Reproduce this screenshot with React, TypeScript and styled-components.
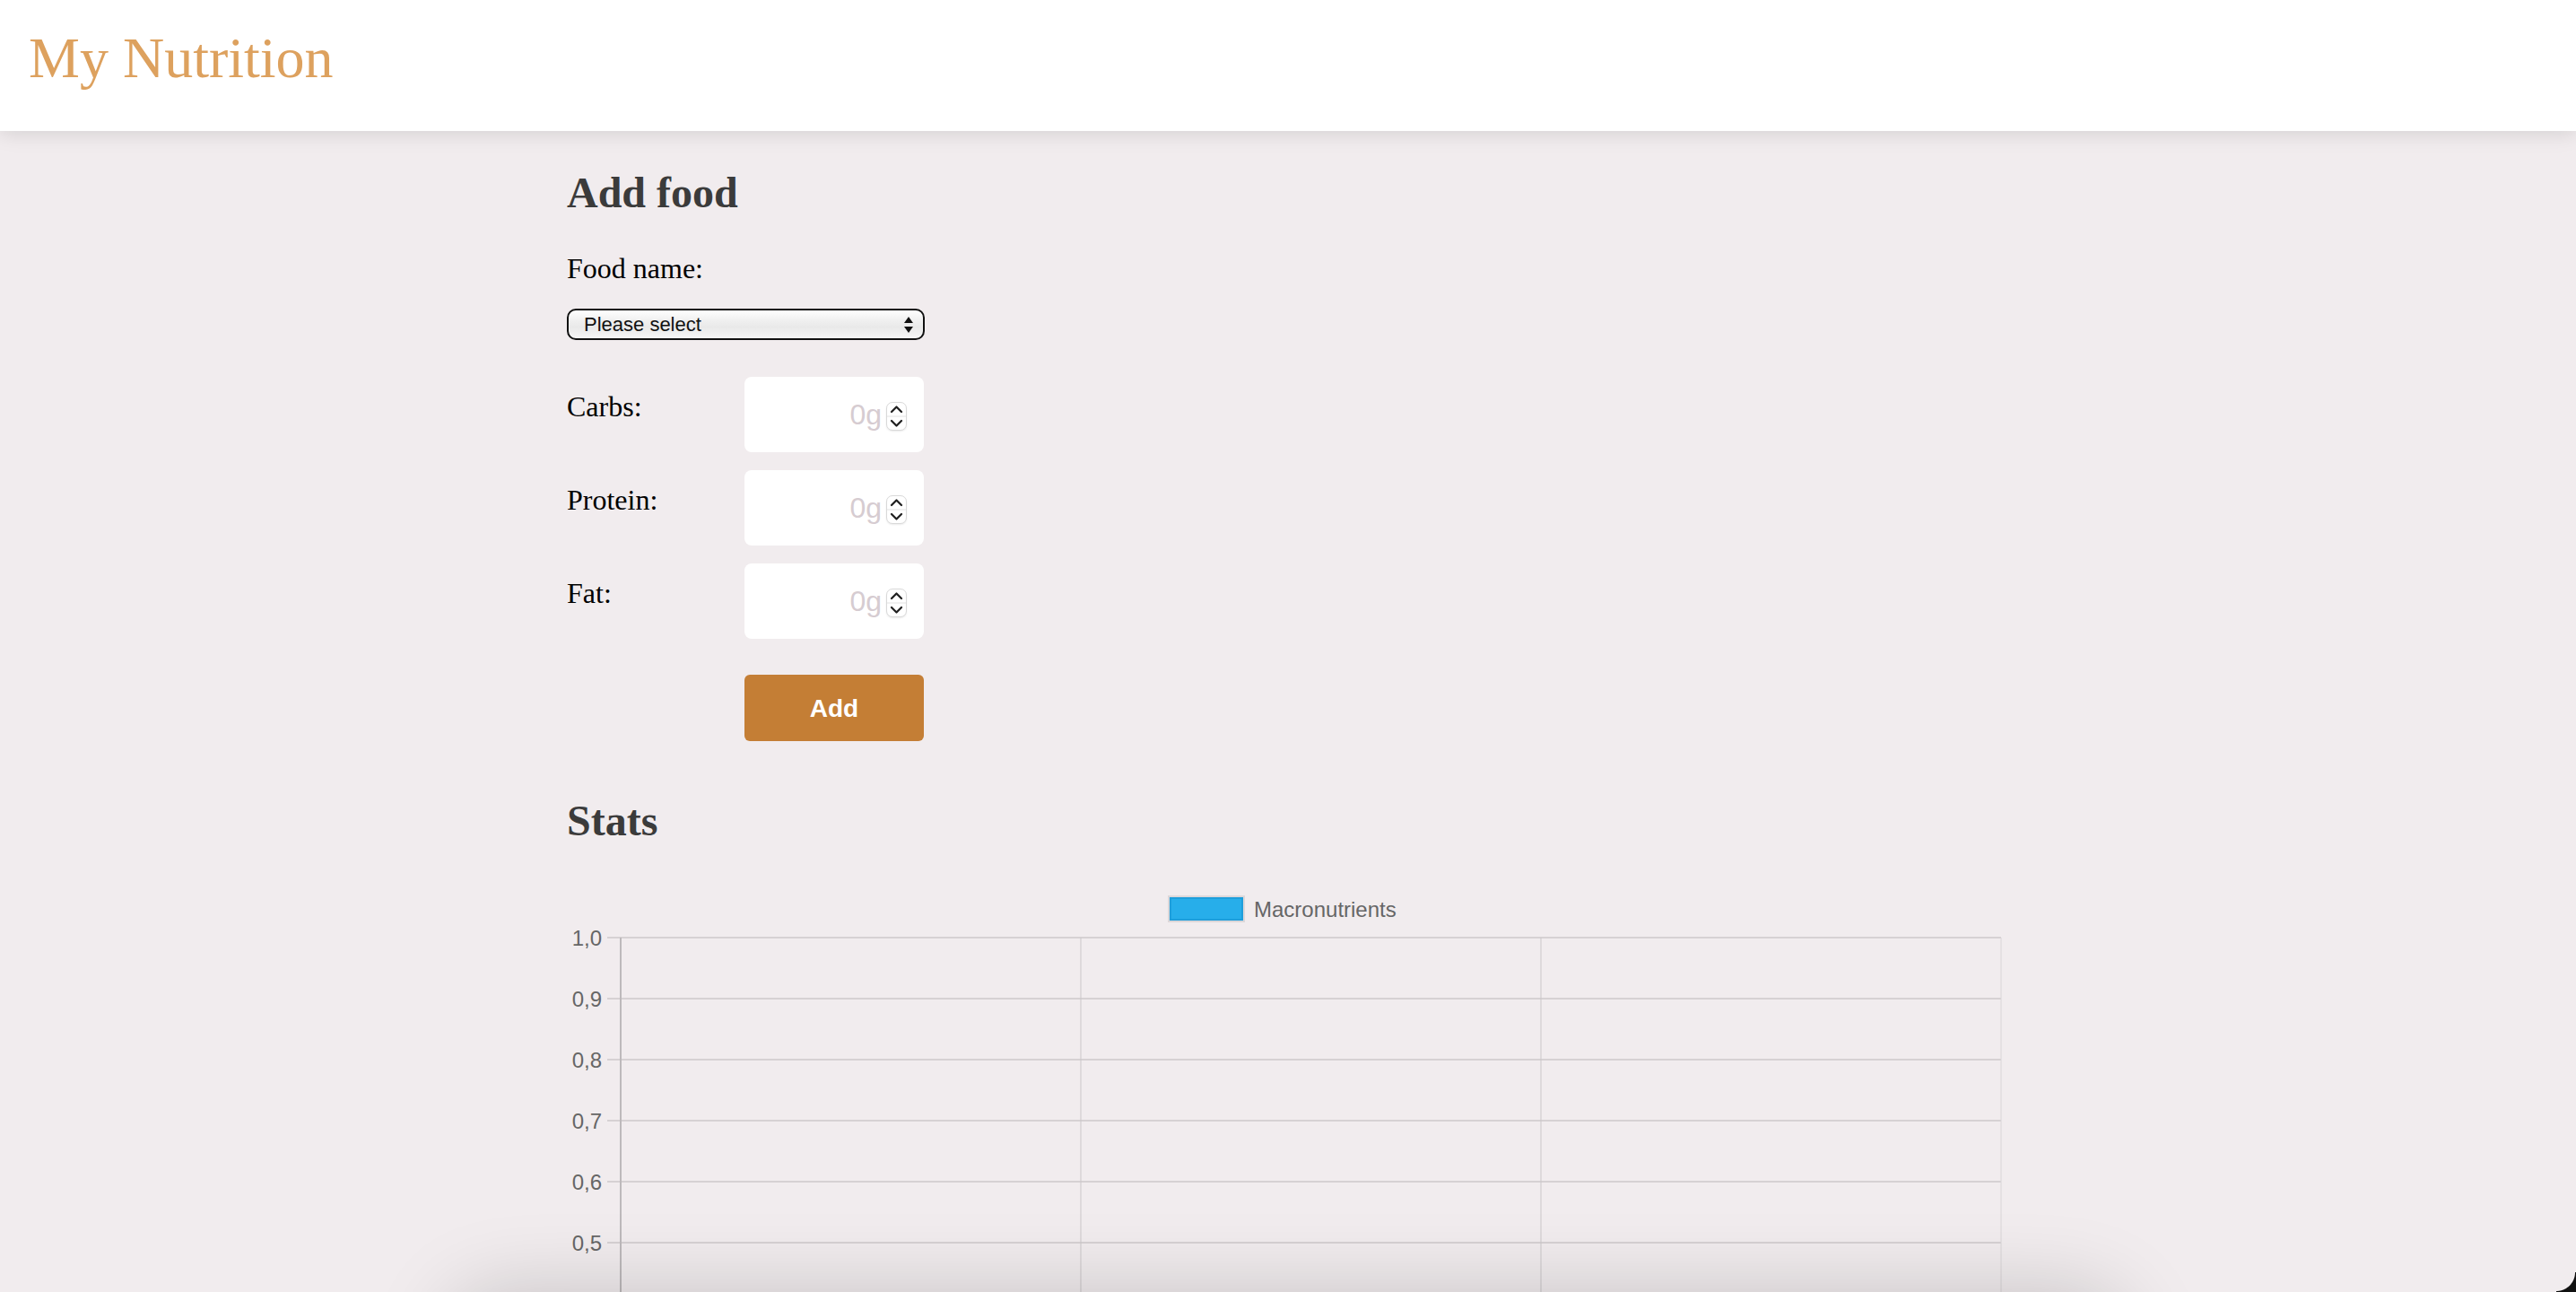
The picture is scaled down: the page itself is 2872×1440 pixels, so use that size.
import React from "react";
import styled, { createGlobalStyle } from "styled-components";

const GlobalStyle = createGlobalStyle`
  * { box-sizing: border-box; }
  html, body { margin: 0; padding: 0; background: #f1ecee; }
  body {
    font-family: "Liberation Serif", "Times New Roman", serif;
    color: #000;
    overflow: hidden;
  }
`;

const Header = styled.header`
  position: relative;
  z-index: 2;
  height: 146px;
  padding: 28px 32px 0;
  background: #fff;
  box-shadow: 0 2px 22px rgba(0, 0, 0, 0.13);
`;

const Title = styled.h1`
  margin: 0;
  font-family: "Liberation Serif", "Times New Roman", serif;
  font-weight: 400;
  font-size: 64px;
  line-height: 73.6px;
  color: #dda15e;
`;

const Main = styled.main`
  width: 1608px;
  margin: 0 auto;
  padding-top: 41px;
`;

const SectionTitle = styled.h2<{ $mt?: number; $mb: number }>`
  margin: ${(p) => p.$mt ?? 0}px 0 ${(p) => p.$mb}px;
  font-family: "Liberation Serif", "Times New Roman", serif;
  font-size: 48px;
  line-height: 56px;
  font-weight: 700;
  color: #3b3b3b;
`;

const FieldLabel = styled.label<{ $pt?: number }>`
  display: block;
  padding-top: ${(p) => p.$pt ?? 0}px;
  font-size: 32px;
  line-height: 37px;
  color: #000;
`;

const SelectWrap = styled.div`
  position: relative;
  width: 399px;
  height: 35px;
  margin-top: 26px;
`;

const Select = styled.select`
  appearance: none;
  -webkit-appearance: none;
  width: 100%;
  height: 100%;
  margin: 0;
  padding: 0 0 0 17px;
  border: 2px solid #111;
  border-radius: 10px;
  background: linear-gradient(#ffffff 0%, #f0f0f0 35%, #e9e9e9 60%, #f6f6f6 100%);
  box-shadow: inset 0 1px 2px rgba(255, 255, 255, 0.9);
  font-family: "Liberation Sans", Arial, sans-serif;
  font-size: 22px;
  color: #111;
  outline: none;
`;

const SelectArrows = styled.svg`
  position: absolute;
  right: 13px;
  top: 9px;
  width: 10px;
  height: 18px;
  pointer-events: none;
`;

const FormGrid = styled.div`
  display: grid;
  grid-template-columns: 198px 200px;
  row-gap: 20px;
  align-items: start;
  margin-top: 41px;
`;

const InputBox = styled.div`
  display: flex;
  align-items: center;
  gap: 5px;
  width: 200px;
  height: 84px;
  padding: 0 19px 0 12px;
  background: #fff;
  border-radius: 8px;
`;

const NumberInput = styled.input`
  flex: 1;
  min-width: 0;
  margin: 0;
  padding: 0;
  border: none;
  outline: none;
  background: transparent;
  text-align: right;
  font-family: "Liberation Sans", Arial, sans-serif;
  font-size: 32px;
  color: #333;
  -moz-appearance: textfield;
  &::placeholder {
    color: #d6ccd1;
  }
  &::-webkit-inner-spin-button,
  &::-webkit-outer-spin-button {
    -webkit-appearance: none;
    margin: 0;
  }
`;

const Spinner = styled.div`
  flex: none;
  width: 23px;
  height: 32px;
  margin-top: 4px;
  border: 1px solid #d9d9d9;
  border-radius: 7px;
  background: #fff;
  box-shadow: 0 1px 2px rgba(0, 0, 0, 0.08);
  display: flex;
`;

const AddButton = styled.button`
  grid-column: 2;
  width: 200px;
  height: 74px;
  margin-top: 20px;
  padding: 2px 0 0;
  border: none;
  border-radius: 6px;
  background: #c47e35;
  color: #fff;
  font-family: "Liberation Sans", Arial, sans-serif;
  font-weight: 700;
  font-size: 28px;
  cursor: pointer;
`;

const ChartSvg = styled.svg`
  display: block;
  width: 1608px;
  height: 500px;
  font-family: "Liberation Sans", Arial, sans-serif;
`;

const BottomShade = styled.div`
  position: fixed;
  left: 50%;
  bottom: -200px;
  width: 1872px;
  height: 200px;
  margin-left: -936px;
  border-radius: 60px;
  background: #f1ecee;
  box-shadow: 0 0 90px rgba(0, 0, 0, 0.18);
  pointer-events: none;
  z-index: 3;
`;

const WindowCorner = styled.div`
  position: fixed;
  right: 0;
  bottom: 0;
  width: 22px;
  height: 22px;
  background: radial-gradient(circle at 0 0, transparent 20.5px, #111 21.5px);
  pointer-events: none;
  z-index: 4;
`;

function SpinnerIcon() {
  return (
    <svg width="21" height="30" viewBox="0 0 21 30">
      <path d="M5 10 L10.5 4.5 L16 10" fill="none" stroke="#222" strokeWidth="2.3" strokeLinecap="round" strokeLinejoin="round" />
      <line x1="0" y1="15" x2="21" y2="15" stroke="#e2e2e2" strokeWidth="1" />
      <path d="M5 20 L10.5 25.5 L16 20" fill="none" stroke="#222" strokeWidth="2.3" strokeLinecap="round" strokeLinejoin="round" />
    </svg>
  );
}

function MacroField({ label }: { label: string }) {
  return (
    <>
      <FieldLabel $pt={15}>{label}</FieldLabel>
      <InputBox>
        <NumberInput type="number" placeholder="0g" />
        <Spinner>
          <SpinnerIcon />
        </Spinner>
      </InputBox>
    </>
  );
}

const yLabels = ["1,0", "0,9", "0,8", "0,7", "0,6", "0,5"];
const TOP = 65;
const STEP = 68;
const LEFT = 60;
const RIGHT = 1599;
const cols = [573, 1086, 1599];
const GRID_BOTTOM = 500;

function StatsChart() {
  return (
    <ChartSvg viewBox="0 0 1608 500">
      {/* legend */}
      <rect x="670" y="18" width="86" height="30" fill="#dcd7d9" />
      <rect x="672" y="20" width="82" height="26" fill="#1e9edb" />
      <rect x="674" y="22" width="78" height="22" fill="#27aeea" />
      <text x="766" y="42" fontSize="24" fill="#666">Macronutrients</text>

      {/* horizontal grid with y tick labels */}
      {yLabels.map((l, i) => {
        const y = TOP + i * STEP;
        return (
          <g key={l}>
            <line x1="45" y1={y} x2={RIGHT} y2={y} stroke="#d6d1d3" strokeWidth="2" />
            <text x="39" y={y + 8.5} fontSize="24" fill="#666" textAnchor="end">{l}</text>
          </g>
        );
      })}

      {/* vertical grid */}
      {cols.map((x, i) => (
        <line
          key={x}
          x1={x}
          y1={TOP}
          x2={x}
          y2={GRID_BOTTOM}
          stroke={i === cols.length - 1 ? "#dad6d8" : "#cbc7c9"}
          strokeWidth="1"
        />
      ))}
      <line x1={LEFT} y1={TOP} x2={LEFT} y2={GRID_BOTTOM} stroke="#bdb9bb" strokeWidth="2" />
    </ChartSvg>
  );
}

export default function App() {
  return (
    <>
      <GlobalStyle />
      <Header>
        <Title>My Nutrition</Title>
      </Header>
      <Main>
        <SectionTitle $mb={38}>Add food</SectionTitle>
        <FieldLabel>Food name:</FieldLabel>
        <SelectWrap>
          <Select defaultValue="">
            <option value="">Please select</option>
            <option value="apple">Apple</option>
            <option value="bread">Bread</option>
          </Select>
          <SelectArrows viewBox="0 0 10 18">
            <path d="M0 7 L5 0 L10 7 Z" fill="#111" />
            <path d="M0 11 L5 18 L10 11 Z" fill="#111" />
          </SelectArrows>
        </SelectWrap>
        <FormGrid>
          <MacroField label="Carbs:" />
          <MacroField label="Protein:" />
          <MacroField label="Fat:" />
          <AddButton>Add</AddButton>
        </FormGrid>
        <SectionTitle $mt={61} $mb={37}>Stats</SectionTitle>
        <StatsChart />
      </Main>
      <BottomShade />
      <WindowCorner />
    </>
  );
}
